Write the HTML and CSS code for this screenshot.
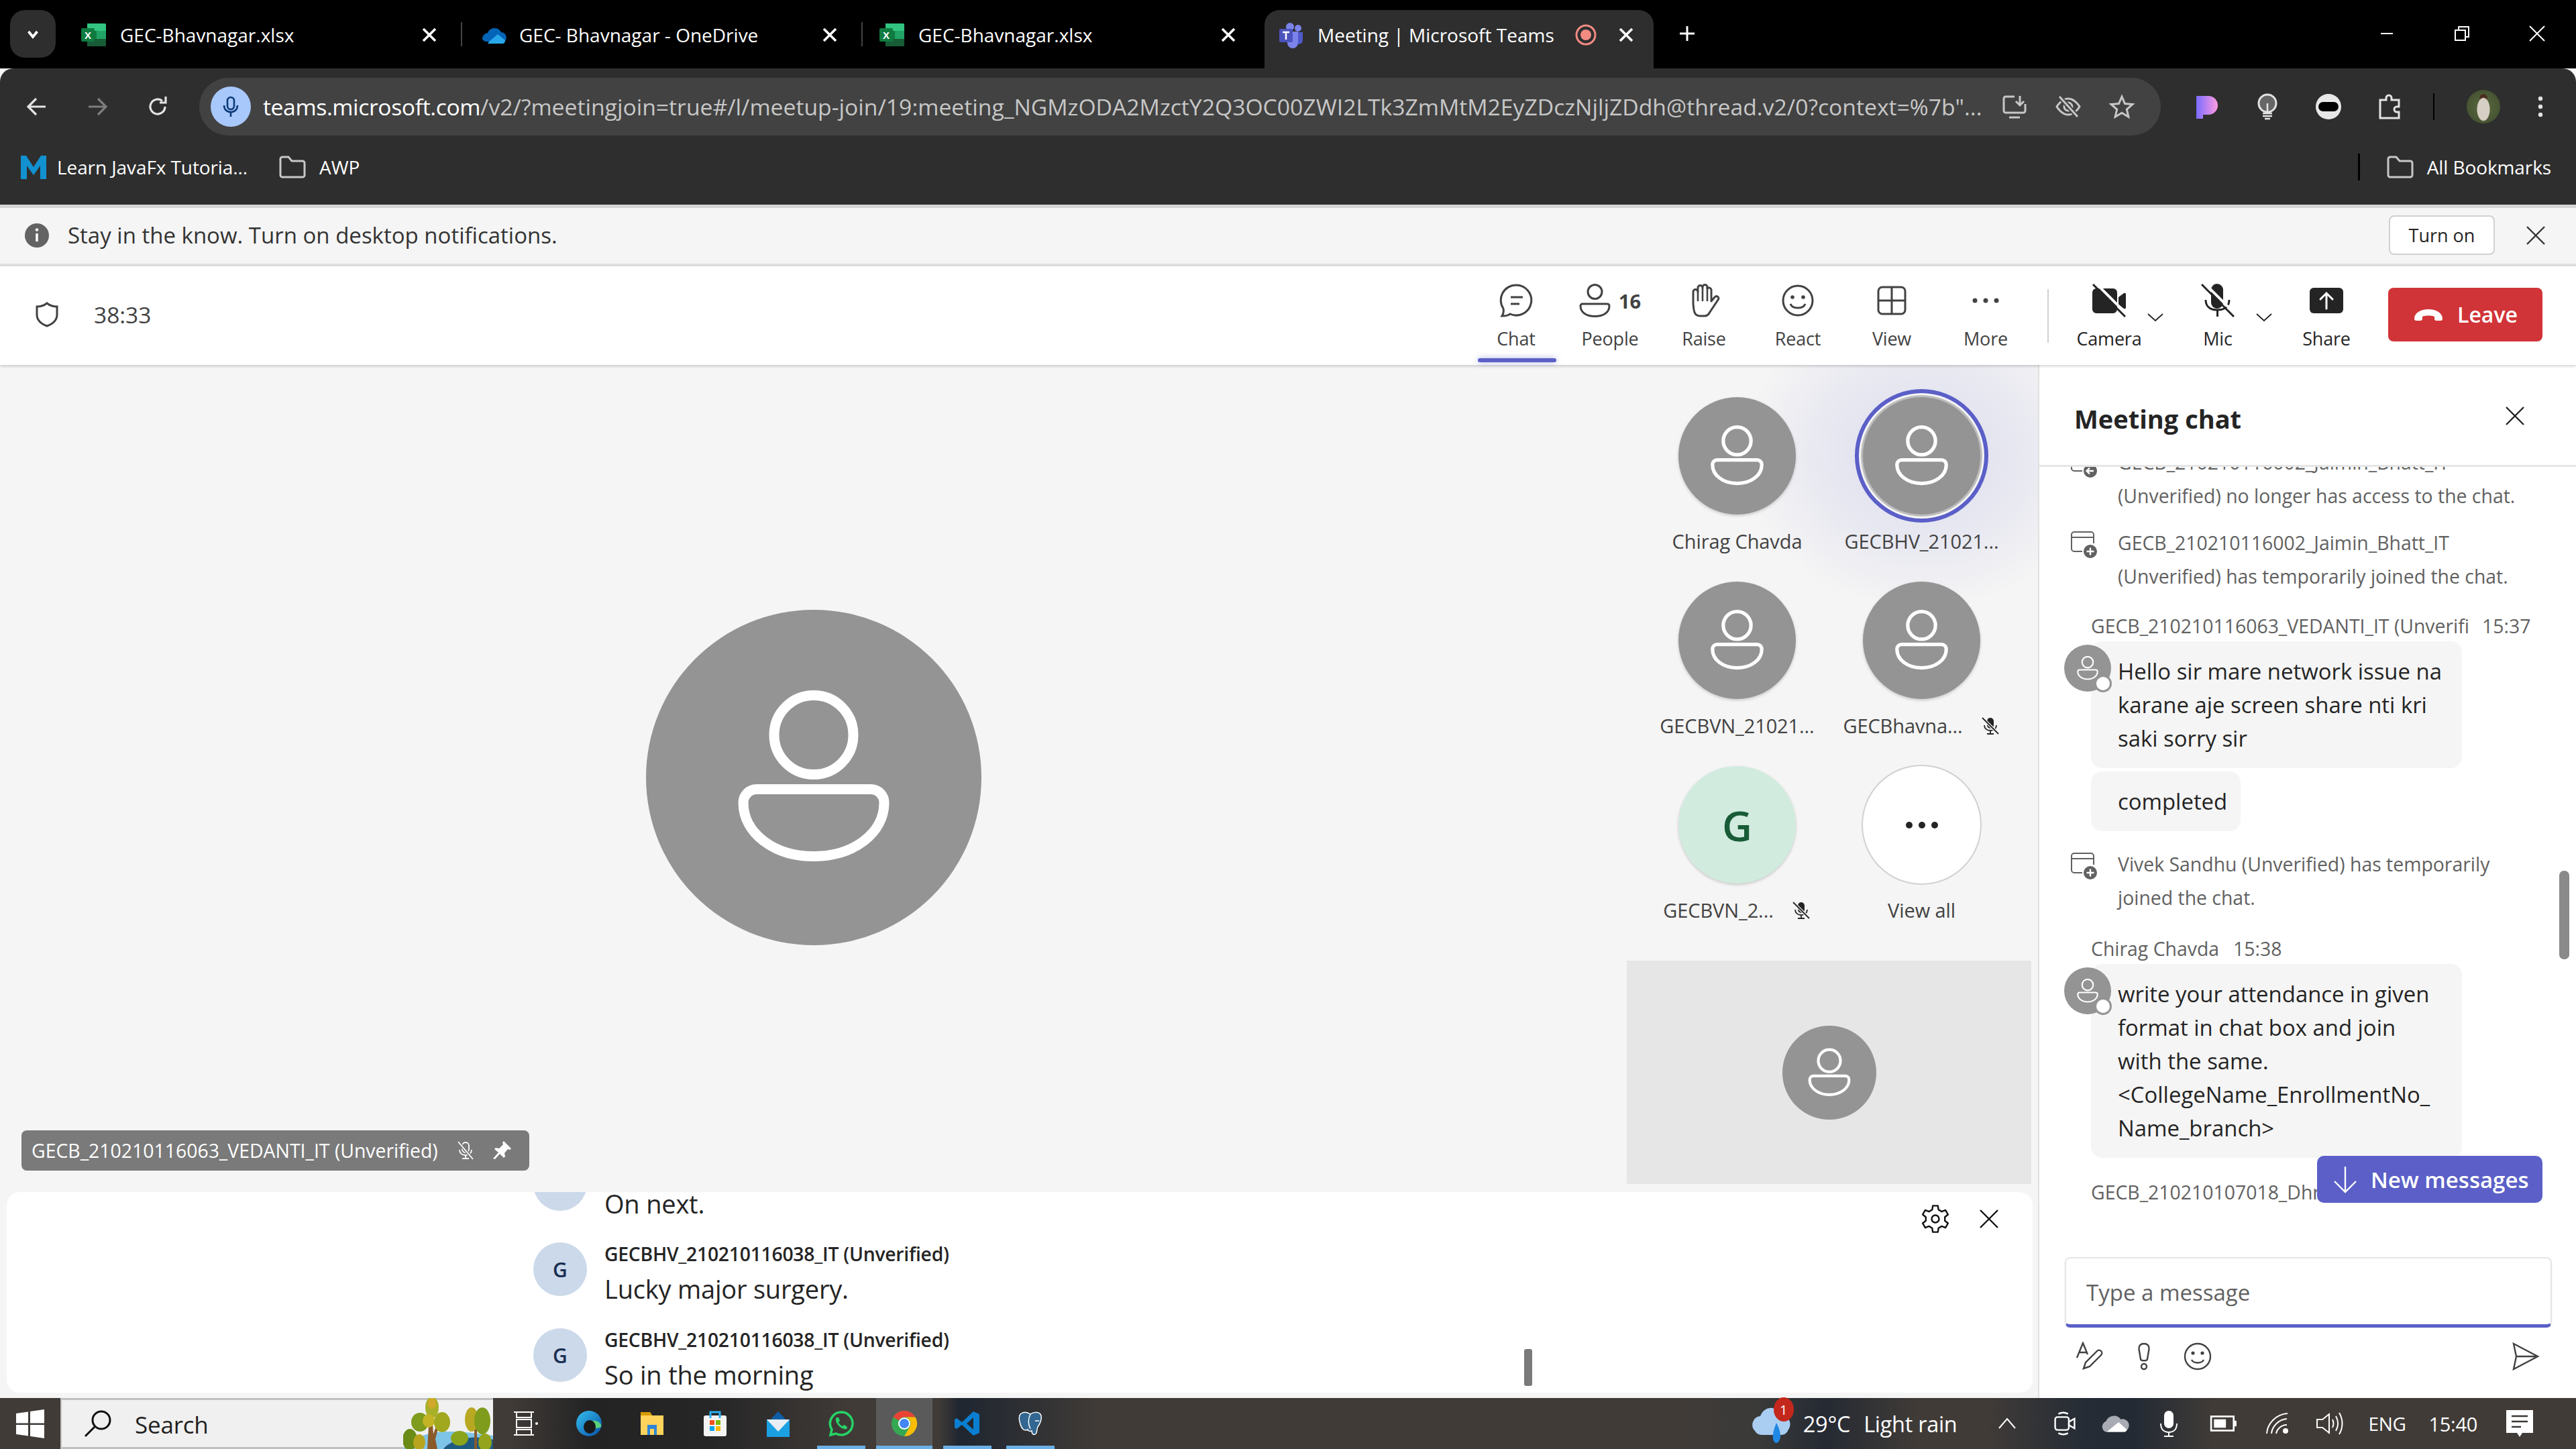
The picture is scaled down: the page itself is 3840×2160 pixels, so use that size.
FILE: index.html
```html
<!DOCTYPE html>
<html lang="en">
<head>
<meta charset="utf-8">
<title>Meeting | Microsoft Teams</title>
<link rel="stylesheet" href="styles.css">
</head>
<body>
<svg class="sprite" xmlns="http://www.w3.org/2000/svg">
  <symbol id="person" viewBox="0 0 100 100"><circle cx="50" cy="37.3" r="11.8" fill="none" stroke="#fff" stroke-width="3"/><path d="M33 53.5h34a4 4 0 0 1 4 4c0 9-9 16-21 16s-21-7-21-16a4 4 0 0 1 4-4z" fill="none" stroke="#fff" stroke-width="3"/></symbol>
  <symbol id="x" viewBox="0 0 30 30"><path d="M2 2l26 26M28 2L2 28" fill="none" stroke="currentColor" stroke-width="2.4"/></symbol>
  <symbol id="xbold" viewBox="0 0 30 30"><path d="M6 6l18 18M24 6L6 24" fill="none" stroke="currentColor" stroke-width="3.6"/></symbol>
  <symbol id="folder" viewBox="0 0 40 34"><path d="M2 5a3 3 0 0 1 3-3h9l5 6h16a3 3 0 0 1 3 3v18a3 3 0 0 1-3 3H5a3 3 0 0 1-3-3z" fill="none" stroke="currentColor" stroke-width="3"/></symbol>
  <symbol id="xls" viewBox="0 0 40 40"><path d="M10 3h26a2 2 0 0 1 2 2v30a2 2 0 0 1-2 2H10z" fill="#107c41"/><path d="M10 3h26a2 2 0 0 1 2 2v9H10z" fill="#33c481"/><path d="M24 14h14v12H24z" fill="#21a366"/><path d="M10 26h28v9a2 2 0 0 1-2 2H10z" fill="#185c37"/><rect x="1" y="10" width="20" height="20" rx="2" fill="#0f7b3f"/><text x="11" y="26" class="svgx">X</text></symbol>
  <symbol id="micoff" viewBox="0 0 30 30"><rect x="10" y="3" width="10" height="16" rx="5" fill="currentColor"/><path d="M6 14c0 5 4 8 9 8s9-3 9-8M15 22v5M10 27h10" fill="none" stroke="currentColor" stroke-width="1.8"/><path d="M3 3l24 24" stroke="#f5f5f5" stroke-width="4.5"/><path d="M3 3l24 24" stroke="currentColor" stroke-width="1.8"/></symbol>
  <symbol id="sysadd" viewBox="0 0 44 42"><path d="M7 30a4 4 0 0 1-4-4V5a4 4 0 0 1 4-4h25a4 4 0 0 1 4 4v13M3 9h33M7 30h13" fill="none" stroke="#616161" stroke-width="2"/><circle cx="31" cy="30" r="11" fill="#616161" stroke="#fff" stroke-width="2"/><path d="M31 24.500v11M25.500 30h11" stroke="#fff" stroke-width="2.400"/></symbol>
  <symbol id="sysleft" viewBox="0 0 44 42"><path d="M7 30a4 4 0 0 1-4-4V5a4 4 0 0 1 4-4h25a4 4 0 0 1 4 4v13M3 9h33M7 30h13" fill="none" stroke="#616161" stroke-width="2"/><circle cx="31" cy="30" r="11" fill="#616161" stroke="#fff" stroke-width="2"/><path d="M36 30H26M30 25.500L25.500 30l4.500 4.500" fill="none" stroke="#fff" stroke-width="2.400"/></symbol>
  <symbol id="chev" viewBox="0 0 24 14"><path d="M1 2l11 10L23 2" fill="none" stroke="currentColor" stroke-width="1.800"/></symbol>
</svg>

<header class="tabstrip">
  <button class="tablist"><svg class="i16" viewBox="0 0 20 20"><path d="M5 7l5 6 5-6" fill="none" stroke="#fff" stroke-width="3"/></svg></button>
  <div class="tab t1"><svg class="fav"><use href="#xls"/></svg><span class="tabtitle">GEC-Bhavnagar.xlsx</span><svg class="tabx"><use href="#xbold"/></svg></div>
  <div class="tab t2"><svg class="fav" viewBox="0 0 40 40"><path d="M4 26a9 9 0 0 1 8-9 11 11 0 0 1 20-1 8 8 0 0 1 5 14H10a7 7 0 0 1-6-4z" fill="#0364b8"/><path d="M14 30l13-11 11 9a5 5 0 0 1-3 5H12z" fill="#28a8ea"/></svg><span class="tabtitle">GEC- Bhavnagar - OneDrive</span><svg class="tabx"><use href="#xbold"/></svg></div>
  <div class="tab t3"><svg class="fav"><use href="#xls"/></svg><span class="tabtitle">GEC-Bhavnagar.xlsx</span><svg class="tabx"><use href="#xbold"/></svg></div>
  <div class="tab active">
    <svg class="fav" viewBox="0 0 40 40"><circle cx="30" cy="10" r="5" fill="#7b83eb"/><circle cx="18" cy="8" r="6" fill="#7b83eb"/><path d="M25 16h12v12a6 6 0 0 1-12 0z" fill="#5059c9"/><path d="M10 15h20v17a8 8 0 0 1-16 0z" fill="#7b83eb"/><rect x="2" y="11" width="20" height="20" rx="2" fill="#4b53bc"/><path d="M7 16h10M12 16v11" stroke="#fff" stroke-width="2.500"/></svg>
    <span class="tabtitle">Meeting | Microsoft Teams</span>
    <svg class="rec" viewBox="0 0 34 34"><circle cx="17" cy="17" r="14" fill="none" stroke="#f28b82" stroke-width="3"/><circle cx="17" cy="17" r="8" fill="#f28b82"/></svg>
    <svg class="tabx"><use href="#xbold"/></svg>
  </div>
  <svg class="plus" viewBox="0 0 30 30"><path d="M15 4v22M4 15h22" stroke="#fff" stroke-width="3"/></svg>
  <div class="winctl">
    <svg class="win" viewBox="0 0 30 30"><path d="M6 15h18" stroke="#fff" stroke-width="2"/></svg>
    <svg class="win" viewBox="0 0 30 30"><path d="M10 9V5h15v15h-4M5 10h15v15H5z" fill="none" stroke="#fff" stroke-width="2"/></svg>
    <svg class="win" viewBox="0 0 30 30"><path d="M4 4l22 22M26 4L4 26" stroke="#fff" stroke-width="2"/></svg>
  </div>
</header>

<div class="toolbar">
  <svg class="nav" viewBox="0 0 40 40"><path d="M33 20H8M19 8L7 20l12 12" fill="none" stroke="#e3e3e3" stroke-width="3.200"/></svg>
  <svg class="nav" viewBox="0 0 40 40"><path d="M7 20h25M21 8l12 12-12 12" fill="none" stroke="#7d7d7d" stroke-width="3.200"/></svg>
  <svg class="nav" viewBox="0 0 40 40"><path d="M31 20a11 11 0 1 1-4-8.500M32 5v9h-9" fill="none" stroke="#e3e3e3" stroke-width="3.200"/></svg>
  <div class="omnibox">
    <span class="micchip"><svg class="i36" viewBox="0 0 36 36"><rect x="13" y="4" width="10" height="18" rx="5" fill="none" stroke="#0b3a78" stroke-width="2.600"/><path d="M8 16c0 6 4 10 10 10s10-4 10-10M18 26v7" fill="none" stroke="#0b3a78" stroke-width="2.600"/></svg></span>
    <span class="url"><b class="host">teams.microsoft.com</b>/v2/?meetingjoin=true#/l/meetup-join/19:meeting_NGMzODA2MzctY2Q3OC00ZWI2LTk3ZmMtM2EyZDczNjljZDdh@thread.v2/0?context=%7b"...</span>
    <svg class="omni" viewBox="0 0 40 40"><path d="M20 5H7a3 3 0 0 0-3 3v18a3 3 0 0 0 3 3h26a3 3 0 0 0 3-3V16M12 36h16M28 4v14M22 12l6 6 6-6" fill="none" stroke="#c7c7c7" stroke-width="3"/></svg>
    <svg class="omni" viewBox="0 0 40 40"><path d="M3 20s7-12 17-12 17 12 17 12-7 12-17 12S3 20 3 20z" fill="none" stroke="#c7c7c7" stroke-width="3"/><circle cx="20" cy="20" r="6" fill="none" stroke="#c7c7c7" stroke-width="3"/><path d="M7 5l27 30" stroke="#424242" stroke-width="7"/><path d="M7 5l27 30" stroke="#c7c7c7" stroke-width="3"/></svg>
    <svg class="omni" viewBox="0 0 40 40"><path d="M20 5l4.500 10.500 11.500 1-8.700 7.500 2.600 11.200L20 29.300l-9.900 5.900 2.600-11.200L4 16.500l11.500-1z" fill="none" stroke="#c7c7c7" stroke-width="3"/></svg>
  </div>
  <div class="exts">
    <svg class="ext" viewBox="0 0 40 40"><defs><linearGradient id="pg" x1="0" x2="1"><stop offset="0" stop-color="#7a6cff"/><stop offset="1" stop-color="#ff9be0"/></linearGradient></defs><path d="M5 4h18a14 14 0 0 1 0 28h-8v6H5z" fill="url(#pg)"/></svg>
    <svg class="ext" viewBox="0 0 40 40"><circle cx="20" cy="15" r="13" fill="#666" stroke="#e3e3e3" stroke-width="3"/><path d="M13 30h14M13 34h14M16 38h8M20 15v15" stroke="#e3e3e3" stroke-width="2.600"/></svg>
    <svg class="ext" viewBox="0 0 40 40"><circle cx="20" cy="20" r="19" fill="#e8e8e8"/><rect x="5" y="13" width="30" height="14" rx="7" fill="#000"/></svg>
    <svg class="ext" viewBox="0 0 40 40"><path d="M6 10h9V7a4 4 0 0 1 8 0v3h11v10h-3a4 4 0 0 0 0 8h3v9H6z" fill="none" stroke="#e3e3e3" stroke-width="3"/></svg>
    <span class="vsep"></span>
    <span class="profile"></span>
    <svg class="ext" viewBox="0 0 40 40"><circle cx="20" cy="8" r="3.200" fill="#e3e3e3"/><circle cx="20" cy="20" r="3.200" fill="#e3e3e3"/><circle cx="20" cy="32" r="3.200" fill="#e3e3e3"/></svg>
  </div>
</div>

<nav class="bookmarks">
  <svg class="bmicon" viewBox="0 0 40 40"><path d="M1 38V3h8l11 17L31 3h8v35h-9V18l-10 14-10-14v20z" fill="#1291d0"/></svg>
  <span class="bmtext first">Learn JavaFx Tutoria...</span>
  <svg class="bmfolder"><use href="#folder"/></svg>
  <span class="bmtext">AWP</span>
  <span class="bmspace"></span>
  <span class="bmsep"></span>
  <svg class="bmfolder"><use href="#folder"/></svg>
  <span class="bmtext">All Bookmarks</span>
</nav>

<div class="notif">
  <svg class="info" viewBox="0 0 38 38"><circle cx="19" cy="19" r="18" fill="#636363"/><path d="M19 16v12" stroke="#fff" stroke-width="3.500"/><circle cx="19" cy="10.500" r="2.200" fill="#fff"/></svg>
  <span class="notiftext">Stay in the know. Turn on desktop notifications.</span>
  <span class="turnon">Turn on</span>
  <svg class="notifx"><use href="#x"/></svg>
</div>

<div class="meetbar">
  <svg class="shield" viewBox="0 0 40 40"><path d="M20 3c5 4 9 5 15 5v12c0 9-7 14-15 17C12 34 5 29 5 20V8c6 0 10-1 15-5z" fill="none" stroke="#424242" stroke-width="3"/></svg>
  <span class="timer">38:33</span>
  <span class="meetspace"></span>
  <div class="ctl sel">
    <svg class="ctlicon" viewBox="0 0 50 50"><path d="M25 2a22.500 22.500 0 1 1-9 43c-3 3-8 3-12 3 2-3 3-6 2-11A22.500 22.500 0 0 1 25 2z" fill="none" stroke="#424242" stroke-width="3"/><path d="M17 20h18M17 30h13" stroke="#424242" stroke-width="3"/></svg>
    <span>Chat</span>
  </div>
  <div class="ctl">
    <div class="peoplerow"><svg class="ctlicon pico" viewBox="0 0 47 50"><circle cx="23.500" cy="12" r="10.500" fill="none" stroke="#424242" stroke-width="3"/><path d="M5 30h37a3 3 0 0 1 3 3c0 10-9 15.500-21.500 15.500S2 43 2 33a3 3 0 0 1 3-3z" fill="none" stroke="#424242" stroke-width="3"/></svg><b class="count">16</b></div>
    <span>People</span>
  </div>
  <div class="ctl">
    <svg class="ctlicon" viewBox="0 0 50 50"><path d="M9 30V12a3.500 3.500 0 0 1 7 0V6a3.500 3.500 0 0 1 7 0V5a3.500 3.500 0 0 1 7 0v2a3.500 3.500 0 0 1 6 2v17l5-6c3-3 8 0 5 4L34 42c-2 4-4 6-8 6h-7c-5 0-8-3-9-9z" fill="none" stroke="#424242" stroke-width="3" stroke-linejoin="round"/><path d="M16 12v14M23 6v20M30 5v21" stroke="#424242" stroke-width="2.600"/></svg>
    <span>Raise</span>
  </div>
  <div class="ctl">
    <svg class="ctlicon" viewBox="0 0 50 50"><circle cx="25" cy="25" r="22" fill="none" stroke="#424242" stroke-width="3"/><circle cx="17" cy="20" r="2.800" fill="#424242"/><circle cx="33" cy="20" r="2.800" fill="#424242"/><path d="M14 30c3 8 19 8 22 0" fill="none" stroke="#424242" stroke-width="3"/></svg>
    <span>React</span>
  </div>
  <div class="ctl">
    <svg class="ctlicon" viewBox="0 0 50 50"><rect x="5" y="5" width="40" height="40" rx="6" fill="none" stroke="#424242" stroke-width="3"/><path d="M25 5v40M5 25h40" stroke="#424242" stroke-width="3"/></svg>
    <span>View</span>
  </div>
  <div class="ctl">
    <svg class="ctlicon" viewBox="0 0 50 50"><circle cx="9" cy="25" r="3.500" fill="#424242"/><circle cx="25" cy="25" r="3.500" fill="#424242"/><circle cx="41" cy="25" r="3.500" fill="#424242"/></svg>
    <span>More</span>
  </div>
  <span class="ctlsep"></span>
  <div class="ctl dev">
    <svg class="ctlicon" viewBox="0 0 50 50"><path d="M0 13a6 6 0 0 1 6-6h25a6 6 0 0 1 6 6v25a6 6 0 0 1-6 6H6a6 6 0 0 1-6-6zM39 20l8-6a2 2 0 0 1 3 2v19a2 2 0 0 1-3 2l-8-6z" fill="#242424"/><path d="M4 -2L52 46" stroke="#fff" stroke-width="4"/><path d="M1 1l48 48" stroke="#242424" stroke-width="3"/></svg>
    <span>Camera</span>
    <svg class="devchev"><use href="#chev"/></svg>
  </div>
  <div class="ctl dev">
    <svg class="ctlicon" viewBox="0 0 50 50"><rect x="15" y="0" width="18" height="37" rx="9" fill="#242424"/><path d="M7 24c0 10 7 15 17.500 15S42 34 42 24M24.500 39v10" fill="none" stroke="#242424" stroke-width="3"/><path d="M4 -2L52 46" stroke="#fff" stroke-width="4"/><path d="M1 1l48 48" stroke="#242424" stroke-width="3"/></svg>
    <span>Mic</span>
    <svg class="devchev"><use href="#chev"/></svg>
  </div>
  <div class="ctl dev">
    <svg class="ctlicon" viewBox="0 0 50 50"><rect x="0" y="6" width="50" height="38" rx="6" fill="#242424"/><path d="M25 37V15M16 23l9-9 9 9" fill="none" stroke="#fff" stroke-width="3" stroke-linecap="round"/></svg>
    <span>Share</span>
  </div>
  <button class="leave"><svg class="hangup" viewBox="0 0 46 24"><path d="M2 18c0-8 9-14 21-14s21 6 21 14c0 2-1 3-3 3h-6c-2 0-3-1-3-3v-3c-3-2-15-2-18 0v3c0 2-1 3-3 3H5c-2 0-3-1-3-3z" fill="#fff"/></svg>Leave</button>
</div>

<main class="content">
  <section class="stage">
    <div class="videos">
      <div class="mainvideo">
        <div class="avatar big"><svg class="person"><use href="#person"/></svg></div>
      </div>
      <div class="side">
        <div class="gallery">
          <div class="tile"><div class="avatar gal"><svg class="person"><use href="#person"/></svg></div><div class="tname">Chirag Chavda</div></div>
          <div class="tile"><div class="avatar gal speaking"><svg class="person"><use href="#person"/></svg></div><div class="tname">GECBHV_21021...</div></div>
          <div class="tile"><div class="avatar gal"><svg class="person"><use href="#person"/></svg></div><div class="tname">GECBVN_21021...</div></div>
          <div class="tile"><div class="avatar gal"><svg class="person"><use href="#person"/></svg></div><div class="tname">GECBhavna...<svg class="tmic"><use href="#micoff"/></svg></div></div>
          <div class="tile"><div class="avatar gal mint">G</div><div class="tname">GECBVN_2...<svg class="tmic"><use href="#micoff"/></svg></div></div>
          <div class="tile"><div class="avatar gal all"><svg class="alldots" viewBox="0 0 50 12"><circle cx="6" cy="6" r="5"/><circle cx="25" cy="6" r="5"/><circle cx="44" cy="6" r="5"/></svg></div><div class="tname">View all</div></div>
        </div>
        <div class="selfview"><div class="avatar self"><svg class="person"><use href="#person"/></svg></div></div>
      </div>
      <div class="nametag">GECB_210210116063_VEDANTI_IT (Unverified)
        <svg class="nt" viewBox="0 0 30 30"><rect x="10" y="3" width="10" height="15" rx="5" fill="none" stroke="#fff" stroke-width="1.800"/><path d="M6 14c0 5 4 8 9 8s9-3 9-8M15 22v5M10 27h10" fill="none" stroke="#fff" stroke-width="1.800"/><path d="M4 2l22 26" stroke="#7a7a7a" stroke-width="4.500"/><path d="M4 2l22 26" stroke="#fff" stroke-width="1.800"/></svg>
        <svg class="nt" viewBox="0 0 30 30"><path d="M18 1l11 11-2 2-3-1-5 6 1 5-2 2-6-6-7 8-3-1 8-9-6-5 2-2 5 1 6-6-1-3z" fill="#fff"/></svg>
      </div>
    </div>
    <div class="captions">
      <div class="caplist">
        <div class="cap clipped"><div class="capav">G</div><div class="capbody"><div class="captext">On next.</div></div></div>
        <div class="cap"><div class="capav">G</div><div class="capbody"><div class="capname">GECBHV_210210116038_IT (Unverified)</div><div class="captext">Lucky major surgery.</div></div></div>
        <div class="cap"><div class="capav">G</div><div class="capbody"><div class="capname">GECBHV_210210116038_IT (Unverified)</div><div class="captext">So in the morning</div></div></div>
      </div>
      <span class="capthumb"></span>
      <div class="captools">
        <svg class="captool" viewBox="0 0 44 44"><path d="M17.300 8.300L18.200 2.400H25.800L26.700 8.300 31.500 11.100 37.100 8.900 40.900 15.500 36.200 19.200V24.800L40.900 28.500 37.100 35.100 31.500 32.900 26.700 35.700 25.800 41.600H18.200L17.300 35.700 12.500 32.900 6.900 35.100 3.100 28.500 7.800 24.800V19.200L3.100 15.500 6.900 8.900 12.500 11.100z" fill="none" stroke="#111" stroke-width="2.400" stroke-linejoin="round"/><circle cx="22" cy="22" r="5.500" fill="none" stroke="#111" stroke-width="2.400"/></svg>
        <svg class="capx"><use href="#x"/></svg>
      </div>
    </div>
  </section>

  <aside class="chat">
    <div class="chathead"><h2>Meeting chat</h2><svg class="chatx"><use href="#x"/></svg></div>
    <div class="msgs">
      <div class="sys first"><svg class="sysicon"><use href="#sysleft"/></svg><p>GECB_210210116002_Jaimin_Bhatt_IT<br>(Unverified) no longer has access to the chat.</p></div>
      <div class="sys"><svg class="sysicon"><use href="#sysadd"/></svg><p>GECB_210210116002_Jaimin_Bhatt_IT<br>(Unverified) has temporarily joined the chat.</p></div>
      <div class="msg">
        <div class="meta"><span class="who clip">GECB_210210116063_VEDANTI_IT (Unverified)</span><span>15:37</span></div>
        <div class="chatav"><svg class="person"><use href="#person"/></svg><span class="status"></span></div>
        <div class="bubble wide">Hello sir mare network issue na<br>karane aje screen share nti kri<br>saki sorry sir</div>
        <div class="bubble">completed</div>
      </div>
      <div class="sys after"><svg class="sysicon"><use href="#sysadd"/></svg><p>Vivek Sandhu (Unverified) has temporarily<br>joined the chat.</p></div>
      <div class="msg second">
        <div class="meta"><span class="who">Chirag Chavda</span><span>15:38</span></div>
        <div class="chatav"><svg class="person"><use href="#person"/></svg><span class="status"></span></div>
        <div class="bubble wide">write your attendance in given<br>format in chat box and join<br>with the same.<br>&lt;CollegeName_EnrollmentNo_<br>Name_branch&gt;</div>
      </div>
      <div class="msg third"><div class="meta"><span class="who">GECB_210210107018_Dhruv_Patel_IT</span></div></div>
      <span class="thumb"></span>
    </div>
    <button class="newmsg"><svg class="newarrow" viewBox="0 0 36 42"><path d="M18 2v38M2 24l16 16 16-16" fill="none" stroke="#fff" stroke-width="2.400"/></svg>New messages</button>
    <div class="composer">
      <div class="inputbox">Type a message</div>
      <div class="tools">
        <svg class="tool" viewBox="0 0 44 44"><path d="M2 24L11 2l7 17M5 16h11" fill="none" stroke="#424242" stroke-width="2.400"/><path d="M12 40l3-9 17-17a4 4 0 0 1 6 6L21 37z" fill="none" stroke="#424242" stroke-width="2.400"/></svg>
        <svg class="tool" viewBox="0 0 44 44"><path d="M22 3c5 0 8 3 7.500 8L27 26c-.5 3-9.500 3-10 0l-2.500-15C14 6 17 3 22 3z" fill="none" stroke="#424242" stroke-width="2.400"/><circle cx="22" cy="37" r="4" fill="none" stroke="#424242" stroke-width="2.400"/></svg>
        <svg class="tool" viewBox="0 0 44 44"><circle cx="22" cy="22" r="19" fill="none" stroke="#424242" stroke-width="2.400"/><circle cx="15" cy="17" r="2.600" fill="#424242"/><circle cx="29" cy="17" r="2.600" fill="#424242"/><path d="M13 27c3 6 15 6 18 0" fill="none" stroke="#424242" stroke-width="2.400"/></svg>
        <span class="toolspace"></span>
        <svg class="tool" viewBox="0 0 44 44"><path d="M5 3l36 19L5 41l4-19zM9 22h32" fill="none" stroke="#424242" stroke-width="2.400"/></svg>
      </div>
    </div>
  </aside>
</main>

<footer class="taskbar">
  <div class="start"><svg class="winlogo" viewBox="0 0 44 44"><path d="M1 7l18-2.500v17H1zM22 4l21-3v20.500H22zM1 24h18v16.500L1 38zM22 24h21v20l-21-3z" fill="#fff"/></svg></div>
  <div class="search">
    <svg class="mag" viewBox="0 0 44 44"><circle cx="27" cy="17" r="13" fill="none" stroke="#111" stroke-width="3"/><path d="M17 27L3 41" stroke="#111" stroke-width="3"/></svg>
    <span class="searchtext">Search</span>
    <svg class="tree" viewBox="0 0 134 76"><path d="M0 76c30-30 60-30 134-20v20z" fill="#7ec4e8"/><path d="M60 76c10-14 44-22 74-14v14z" fill="#1f5a80"/><path d="M36 76l3-52h4l2 30 8-24 3 1-8 30 3 15z" fill="#8a5a2b"/><rect x="106" y="30" width="4" height="46" fill="#8a5a2b"/><ellipse cx="43" cy="14" rx="10" ry="16" fill="#a8b02a"/><ellipse cx="43" cy="8" rx="6" ry="8" fill="#d0a82a"/><ellipse cx="25" cy="36" rx="13" ry="14" fill="#7f9c1c"/><ellipse cx="38" cy="34" rx="9" ry="10" fill="#c2b424"/><ellipse cx="58" cy="36" rx="12" ry="15" fill="#a2a81e"/><ellipse cx="10" cy="62" rx="11" ry="16" fill="#6a8c16"/><ellipse cx="24" cy="66" rx="9" ry="12" fill="#b8a41e"/><ellipse cx="84" cy="60" rx="13" ry="11" fill="#8aa41c"/><ellipse cx="102" cy="32" rx="10" ry="18" fill="#b8a822"/><ellipse cx="118" cy="34" rx="12" ry="20" fill="#7f9c1c"/><ellipse cx="122" cy="66" rx="10" ry="13" fill="#94a41c"/></svg>
  </div>
  <div class="apps">
    <div class="app"><svg class="appi" viewBox="0 0 40 40"><path d="M2 3h30M2 37h30M6 3v8h22V3M6 37v-8h22v8M6 14h22v12H6z" fill="none" stroke="#fff" stroke-width="2"/><circle cx="36" cy="20" r="2" fill="#fff"/></svg></div>
    <div class="app"><svg class="appi" viewBox="0 0 40 40"><defs><linearGradient id="edge" x1="0" y1="0" x2="1" y2="1"><stop offset="0" stop-color="#35c1f1"/><stop offset="1" stop-color="#094ea5"/></linearGradient></defs><circle cx="20" cy="20" r="19" fill="url(#edge)"/><path d="M38 25c-4 3-14 3-16-3-1-4 3-7 8-6 5 1 9 5 8 9z" fill="#5ad07a"/><ellipse cx="21" cy="25" rx="9" ry="10" fill="#1a1a1a"/></svg></div>
    <div class="app"><svg class="appi" viewBox="0 0 40 40"><path d="M3 3h14l3 5h17v29H3z" fill="#ffd35c"/><path d="M3 3h14l3 5H3z" fill="#d89a00"/><path d="M13 22h14v15h-4v-9h-6v9h-4z" fill="#2f86d8"/></svg></div>
    <div class="app"><svg class="appi" viewBox="0 0 40 40"><rect x="3" y="8" width="34" height="31" rx="3" fill="#f4f4f4"/><path d="M13 12V3h14v9" fill="none" stroke="#2ab0f0" stroke-width="3"/><rect x="12" y="15" width="7" height="7" fill="#f25022"/><rect x="21" y="15" width="7" height="7" fill="#7fba00"/><rect x="12" y="24" width="7" height="7" fill="#00a4ef"/><rect x="21" y="24" width="7" height="7" fill="#ffb900"/></svg></div>
    <div class="app"><svg class="appi" viewBox="0 0 40 40"><path d="M20 2l17 18H3z" fill="#0f5ea8"/><path d="M3 14h34v26H3z" fill="#1ba1e2"/><path d="M3 14h34L20 32z" fill="#e8eef3"/></svg></div>
    <div class="app on"><svg class="appi" viewBox="0 0 40 40"><path d="M20 3a17 17 0 0 1 0 34c-3 0-6-1-8-2l-8 2 2-8A17 17 0 0 1 20 3z" fill="none" stroke="#25d366" stroke-width="3.500"/><path d="M13 11c-3 3 0 9 4 13s10 6 12 3l-1-3-4-2-2 2c-3-1-5-4-6-6l2-2-2-5z" fill="#25d366"/></svg></div>
    <div class="app on hot"><svg class="appi" viewBox="0 0 40 40"><circle cx="20" cy="20" r="19" fill="#34a853"/><path d="M20 1a19 19 0 0 1 16.500 9.500H20a9.500 9.500 0 0 0-8.200 4.800L3.500 10.500A19 19 0 0 1 20 1z" fill="#ea4335"/><path d="M36.500 10.500A19 19 0 0 1 20 39l8.200-14.200A9.500 9.500 0 0 0 20 10.500z" fill="#fbbc04"/><circle cx="20" cy="20" r="9" fill="#fff"/><circle cx="20" cy="20" r="7" fill="#4285f4"/></svg></div>
    <div class="app on"><svg class="appi" viewBox="0 0 40 40"><path d="M29 2l9 4v28l-9 4L12 22l-8 6-3-2v-12l3-2 8 6zM29 11l-10 9 10 9z" fill="#0a7fd1"/></svg></div>
    <div class="app on"><svg class="appi" viewBox="0 0 40 40"><path d="M5 6c6-5 12-2 15 0 4-3 11-4 15 0 3 5 0 14-4 19-1 2-1 5-2 9-2 4-7 3-7-3-3 1-6 0-6-2-5 3-9-1-11-8C3 15 2 10 5 6z" fill="#336791" stroke="#fff" stroke-width="1.500"/><path d="M20 6c-4 8-3 16 0 22M27 16h6" fill="none" stroke="#fff" stroke-width="1.500"/></svg></div>
  </div>
  <span class="tbspace"></span>
  <div class="tray">
    <div class="weather"><svg class="wicon" viewBox="0 0 62 62"><path d="M4 42a13 13 0 0 1 8-22 17 17 0 0 1 32-2 14 14 0 0 1 10 22 12 12 0 0 1-10 8H14a12 12 0 0 1-10-6z" fill="#aacdf2"/><path d="M36 30c3 6 6 12 6 20 0 5-3 10-6 10s-6-5-5-10c0-8 3-14 5-20z" fill="#1e88e5"/></svg><span class="badge">1</span></div>
    <span class="temp">29°C</span><span class="sky">Light rain</span>
    <svg class="trayi chevup" viewBox="0 0 30 30"><path d="M3 22L15 8l12 14" fill="none" stroke="#fff" stroke-width="2"/></svg>
    <svg class="trayi trcam" viewBox="0 0 30 30"><rect x="3" y="7" width="17" height="16" rx="3" fill="none" stroke="#fff" stroke-width="2"/><path d="M20 13l7-4v12l-7-4zM7 3c4-2 8-2 12 0M7 27c4 2 8 2 12 0" fill="none" stroke="#fff" stroke-width="2"/></svg>
    <svg class="trayi od" viewBox="0 0 40 26"><path d="M3 22a8 8 0 0 1 4-12 12 12 0 0 1 21-3 9 9 0 0 1 9 15 6 6 0 0 1-4 3H8a6 6 0 0 1-5-3z" fill="#a8abb3"/><path d="M8 25L25 11l12 11a6 6 0 0 1-4 3z" fill="#fff"/></svg>
    <svg class="trayi micw" viewBox="0 0 30 40"><rect x="8" y="1" width="14" height="26" rx="7" fill="#fff"/><path d="M3 20c0 9 5 13 12 13s12-4 12-13M15 33v6M8 39h14" fill="none" stroke="#fff" stroke-width="2"/></svg>
    <svg class="trayi batt" viewBox="0 0 40 26"><rect x="2" y="3" width="32" height="20" fill="none" stroke="#fff" stroke-width="2.500"/><rect x="6" y="7" width="17" height="12" fill="#fff"/><rect x="35" y="9" width="3" height="8" fill="#fff"/></svg>
    <svg class="trayi wifi" viewBox="0 0 40 34"><path d="M2 32C3 17 16 3 33 2M9 32C10 21 20 11 32 10M16 32c1-6 7-13 16-13" fill="none" stroke="#fff" stroke-width="2"/><circle cx="30" cy="28" r="4" fill="#fff"/></svg>
    <svg class="trayi vol" viewBox="0 0 42 36"><path d="M2 12h8l10-8v28l-10-8H2z" fill="none" stroke="#fff" stroke-width="2"/><path d="M25 12c2 4 2 8 0 12M30 7c4 7 4 15 0 22M35 2c6 10 6 22 0 32" fill="none" stroke="#fff" stroke-width="2"/></svg>
    <span class="eng">ENG</span>
    <span class="clock">15:40</span>
    <svg class="trayi notifi" viewBox="0 0 40 40"><path d="M0 0h40v34H24l-4 6-4-6H0z" fill="#fff"/><path d="M8 9h24M8 17h24M8 25h14" stroke="#3b3835" stroke-width="2.500"/></svg>
  </div>
</footer>
</body>
</html>
```

FILE: styles.css
```css
* { box-sizing: border-box; }
html, body { margin: 0; padding: 0; }
body {
  width: 3840px; height: 2160px; overflow: hidden;
  display: flex; flex-direction: column;
  font-family: "Open Sans", "Noto Sans", sans-serif;
  background: #f5f5f5; color: #242424;
}
.sprite { display: none; }
.svgx { font: 700 15px "Liberation Sans", sans-serif; fill: #fff; text-anchor: middle; }
button { border: 0; font: inherit; }
p, h2 { margin: 0; }

/* Browser chrome */
.tabstrip { height: 102px; background: #000; display: flex; align-items: flex-start; flex: none; color: #fff; }
.tablist { width: 68px; height: 71px; margin: 15px 0 0 15px; background: #2e2e2e; border-radius: 22px; display: flex; align-items: center; justify-content: center; padding: 0; }
.i16 { width: 26px; height: 26px; }
.tab { height: 87px; margin-top: 15px; display: flex; align-items: center; font-size: 28px; color: #fff; padding-bottom: 14px; position: relative; }
.t1 { width: 604px; padding-left: 37px; }
.t2 { width: 597px; padding-left: 28px; }
.t3 { width: 601px; padding-left: 26px; }
.tab.active { width: 580px; padding-left: 20px; background: #2e2e2e; border-radius: 22px 22px 0 0; }
.t1::after, .t2::after { content: ""; position: absolute; right: -2px; top: 18px; height: 36px; width: 2px; background: #444; }
.fav { width: 40px; height: 40px; flex: none; }
.tabtitle { margin-left: 19px; white-space: nowrap; flex: 1; }
.tabx { width: 30px; height: 30px; flex: none; margin-right: 32px; color: #fff; }
.t3 .tabx { margin-right: 39px; }
.rec { width: 34px; height: 34px; margin-right: 28px; flex: none; }
.tab.active .tabx { margin-right: 26px; }
.plus { width: 30px; height: 30px; margin: 35px 0 0 35px; }
.winctl { margin-left: auto; display: flex; gap: 82px; padding: 35px 43px 0 0; }
.win { width: 30px; height: 30px; }

.toolbar { height: 101px; background: #2e2e2e; display: flex; align-items: center; padding: 12px 0 0 35px; flex: none; border-radius: 20px 20px 0 0; }
.nav { width: 40px; height: 40px; margin-right: 50px; flex: none; }
.omnibox { margin-left: -8px; width: 2924px; height: 86px; background: #424242; border-radius: 43px; display: flex; align-items: center; padding-left: 17px; flex: none; }
.micchip { width: 60px; height: 60px; border-radius: 50%; background: #a8c7fa; display: flex; align-items: center; justify-content: center; flex: none; }
.i36 { width: 36px; height: 36px; }
.url { margin-left: 18px; width: 2591px; white-space: nowrap; overflow: hidden; font-size: 33.7px; color: #c7c7c7; flex: none; }
.host { color: #fff; font-weight: 400; letter-spacing: -.4px; }
.omni { width: 40px; height: 40px; flex: none; margin-right: 40px; }
.exts { display: flex; align-items: center; margin-left: 48px; }
.ext { width: 40px; height: 40px; margin-right: 51px; flex: none; }
.vsep { width: 2px; height: 40px; background: #000; margin: 0 48px 0 -6px; }
.profile { width: 50px; height: 50px; border-radius: 50%; margin-right: 40px; background: radial-gradient(ellipse 10px 18px at 50% 58%, #d8cfc4 0 90%, transparent 100%), radial-gradient(circle 6px at 50% 24%, #4a2c20 0 90%, transparent 100%), radial-gradient(circle at 50% 50%, #596b3e, #3f4a2e); flex: none; }

.bookmarks { height: 102px; background: #2e2e2e; display: flex; align-items: center; padding: 0 37px 10px 30px; font-size: 28px; color: #fff; flex: none; }
.bmicon { width: 40px; height: 40px; flex: none; }
.bmtext { white-space: nowrap; margin-left: 20px; letter-spacing: -.1px; }
.bmtext.first { margin-left: 15px; margin-right: 47px; }
.bmfolder { width: 40px; height: 34px; color: #c7c7c7; flex: none; }
.bmspace { flex: 1; }
.bmsep { width: 3px; height: 40px; background: #000; margin-right: 40px; }

.notif { height: 92px; background: #f5f5f5; display: flex; align-items: center; padding: 0 45px 2px 36px; border-top: 5px solid #d4d4d4; border-bottom: 4px solid #e0e0e0; flex: none; }
.info { width: 38px; height: 38px; flex: none; }
.notiftext { font-size: 33px; margin-left: 27px; color: #333; }
.turnon { margin-left: auto; width: 158px; height: 59px; background: #fff; border: 2px solid #d1d1d1; border-radius: 8px; font-size: 27px; display: flex; align-items: center; justify-content: center; color: #242424; }
.notifx { width: 30px; height: 30px; margin-left: 46px; color: #333; }

/* Meeting bar */
.meetbar { height: 147px; background: #fff; display: flex; align-items: center; padding: 0 50px; flex: none; box-shadow: 0 2px 4px rgba(0,0,0,.18); position: relative; z-index: 2; }
.shield { width: 40px; height: 40px; flex: none; margin-bottom: 4px; }
.timer { margin-left: 50px; font-size: 33.5px; color: #424242; margin-bottom: 4px; }
.meetspace { flex: 1; }
.ctl { width: 140px; height: 147px; display: flex; flex-direction: column; align-items: center; padding-top: 26px; font-size: 27px; color: #424242; position: relative; flex: none; }
.ctlicon { width: 50px; height: 50px; flex: none; }
.ctl > span { margin-top: 12px; line-height: 40px; letter-spacing: -.2px; }
.ctl.sel::after { content: ""; position: absolute; left: 13px; width: 117px; bottom: 4px; height: 6px; border-radius: 3px; background: #5b5fc7; box-shadow: 0 0 8px rgba(91,95,199,.5); }
.peoplerow { display: flex; align-items: center; gap: 12px; height: 50px; }
.pico { width: 47px; }
.count { font-size: 29px; font-weight: 700; }
.ctlsep { width: 2px; height: 80px; background: #d1d1d1; margin: 0 9px 0 22px; flex: none; }
.dev { width: 162px; }
.dev > span { color: #242424; }
.devchev { position: absolute; right: 0; top: 69px; width: 24px; height: 14px; color: #242424; }
.leave { width: 230px; height: 80px; background: #d13438; color: #fff; border-radius: 8px; display: flex; align-items: center; justify-content: center; gap: 20px; font-size: 32px; font-weight: 600; margin: 0 0 4px 11px; padding: 0; flex: none; }
.hangup { width: 46px; height: 24px; }

/* Stage */
.content { flex: 1; display: flex; min-height: 0; }
.stage { width: 3040px; flex: none; display: flex; flex-direction: column; padding-bottom: 8px; border-right: 2px solid #e0e0e0; background: #f5f5f5; }
.videos { height: 1233px; display: flex; flex: none; position: relative; }
.mainvideo { width: 2425px; display: flex; align-items: center; justify-content: center; flex: none; }
.side { flex: 1; display: flex; flex-direction: column; background: radial-gradient(ellipse 270px 230px at 439px 135px, rgba(91,95,199,.16), rgba(91,95,199,.08) 60%, transparent); }
.gallery { display: grid; grid-template-columns: 275px 275px; justify-content: start; margin-left: 27px; padding-top: 48px; height: 888px; align-content: start; }
.tile { height: 275px; display: flex; flex-direction: column; align-items: center; }
.avatar { border-radius: 50%; background: #949494; display: flex; align-items: center; justify-content: center; flex: none; position: relative; }
.avatar.big { width: 500px; height: 500px; margin-top: -4px; }
.avatar.gal { width: 175px; height: 175px; box-shadow: 0 2px 4px rgba(0,0,0,.18); }
.avatar.self { width: 140px; height: 140px; }
.person { width: 100%; height: 100%; display: block; }
.avatar.speaking { box-shadow: 0 0 0 3px #bdbdbd, 0 0 0 6px #f5f5f5; outline: 6px solid #5b5fc7; outline-offset: 6px; }
.mint { background: #d2ebdf; color: #185c37; font-size: 62px; font-weight: 600; }
.avatar.all { background: #fff; box-shadow: 0 0 0 2px #d1d1d1; }
.alldots { width: 50px; height: 12px; fill: #242424; }
.tname { margin-top: 22px; font-size: 29px; line-height: 36px; color: #424242; white-space: nowrap; display: flex; align-items: center; justify-content: center; letter-spacing: -.1px; }
.tmic { width: 30px; height: 30px; margin-left: 26px; color: #242424; flex: none; }
.selfview { width: 603px; height: 333px; background: #e6e6e6; display: flex; align-items: center; justify-content: center; }
.nametag { position: absolute; left: 32px; top: 1141px; width: 757px; height: 60px; background: #7a7a7a; border-radius: 8px; color: #fff; font-size: 28.4px; display: flex; align-items: center; padding-left: 15px; white-space: nowrap; }
.nt { width: 30px; height: 30px; margin-left: 26px; flex: none; }
.nt + .nt { margin-left: 24px; }
.captions { flex: 1; margin: 0 8px 0 10px; background: #fff; border-radius: 20px; position: relative; overflow: hidden; padding-left: 785px; }
.caplist { display: flex; flex-direction: column; }
.cap { display: flex; height: 128px; gap: 26px; flex: none; }
.cap.clipped { margin-top: -52px; height: 127px; }
.clipped .captext { margin-top: 43px; }
.capav { width: 80px; height: 80px; border-radius: 50%; background: #cbd9ea; color: #1b2f52; display: flex; align-items: center; justify-content: center; font-size: 30px; font-weight: 600; flex: none; }
.capname { font-size: 28.3px; font-weight: 600; line-height: 38px; margin-top: -2px; white-space: nowrap; letter-spacing: -.25px; }
.captext { font-size: 38px; line-height: 52px; margin-top: 7px; white-space: nowrap; letter-spacing: -.2px; }
.capthumb { position: absolute; left: 2262px; top: 234px; width: 12px; height: 55px; background: #7a7a7a; border-radius: 3px; }
.captools { position: absolute; right: 50px; top: 18px; display: flex; gap: 43px; align-items: center; }
.captool { width: 44px; height: 44px; }
.capx { width: 30px; height: 30px; color: #111; }

/* Chat */
.chat { flex: 1; min-width: 0; background: #fff; display: flex; flex-direction: column; position: relative; }
.chathead { height: 152px; flex: none; border-bottom: 3px solid #e6e6e6; display: flex; align-items: center; justify-content: space-between; padding: 10px 76px 0 52px; }
h2 { font-size: 38px; font-weight: 700; color: #242424; }
.chatx { width: 30px; height: 30px; margin-top: -8px; color: #242424; }
.msgs { height: 1178px; flex: none; overflow: hidden; padding: 0 0 0 37px; position: relative; font-size: 29px; }
.sys { display: flex; color: #616161; line-height: 50px; }
.sys.first { margin-top: -32px; }
.sys + .sys { margin-top: 20px; }
.sys.after { margin-top: 24px; }
.sysicon { width: 44px; height: 42px; margin: 8px 0 0 8px; flex: none; }
.sys p { margin-left: 28px; font-size: 28.4px; white-space: nowrap; }
.msg { position: relative; padding-left: 40px; margin-top: 29px; }
.meta { display: flex; gap: 21px; color: #616161; font-size: 28.4px; line-height: 40px; margin-bottom: 3px; }
.who { white-space: nowrap; }
.clip { width: 562px; overflow: hidden; }
.chatav { position: absolute; left: 0; top: 48px; width: 70px; height: 70px; border-radius: 50%; background: #949494; z-index: 1; }
.status { position: absolute; right: -1px; bottom: -1px; width: 26px; height: 26px; border-radius: 50%; background: #fff; border: 3px solid #949494; box-shadow: inset 0 0 0 1px #fff; }
.bubble { background: #f5f5f5; border-radius: 16px; padding: 20px 20px 19px 40px; font-size: 32.9px; line-height: 50px; width: fit-content; white-space: nowrap; color: #242424; margin-bottom: 5px; }
.bubble.wide { width: 553px; }
.msg.second { margin-top: 31px; }
.msg.third { margin-top: 31px; }
.thumb { position: absolute; left: 775px; top: 602px; width: 15px; height: 132px; border-radius: 7px; background: #8a8a8a; }
.newmsg { position: absolute; left: 414px; top: 1179px; width: 336px; height: 70px; background: #5b5fc7; color: #fff; border-radius: 10px; display: flex; align-items: center; font-size: 33px; font-weight: 600; padding-left: 24px; gap: 20px; }
.newarrow { width: 36px; height: 42px; }
.composer { flex: 1; padding: 0 36px 0 38px; }
.inputbox { height: 105px; border: 2px solid #e6e6e6; border-bottom: 5px solid #5b5fc7; border-radius: 8px; display: flex; align-items: center; padding: 2px 0 0 30px; font-size: 33px; color: #616161; box-shadow: 0 1px 3px rgba(0,0,0,.08); }
.tools { display: flex; align-items: center; gap: 36px; padding: 21px 18px 0 16px; }
.tool { width: 44px; height: 44px; flex: none; }
.toolspace { flex: 1; }

/* Taskbar */
.taskbar { height: 76px; flex: none; display: flex; align-items: stretch; color: #fff; background: linear-gradient(90deg, #403b37 0, #403b37 760px, #232324 880px, #262627 1060px, #403b37 1270px, #403b37 1400px, #1f2630 1430px, #403b37 1640px, #403b37 2500px, #3a3a39 2620px, #252a33 2720px, #403b37 2860px, #403b37 2960px, #252c36 3110px, #232a34 3180px, #403b37 3300px); }
.start { width: 90px; display: flex; align-items: center; justify-content: center; flex: none; }
.winlogo { width: 44px; height: 44px; }
.search { width: 645px; flex: none; background: #f0f0f0; border-top: 3px solid #c0c0c0; border-bottom: 3px solid #c0c0c0; border-left: 2px solid #c0c0c0; display: flex; align-items: center; padding-left: 32px; color: #1f1f1f; position: relative; }
.mag { width: 44px; height: 44px; flex: none; }
.searchtext { font-size: 35px; margin-left: 33px; letter-spacing: -.2px; padding-top: 2px; }
.tree { position: absolute; right: 0; top: -3px; width: 134px; height: 76px; }
.apps { display: flex; margin-left: 2px; }
.app { width: 94px; display: flex; align-items: center; justify-content: center; position: relative; flex: none; }
.appi { width: 40px; height: 40px; }
.app.on::after { content: ""; position: absolute; left: 11px; right: 11px; bottom: 0; height: 5px; background: #6cb0e6; }
.app.hot { background: #5a5a5a; width: 84px; margin: 0 5px; }
.app.hot::after { left: 0; right: 0; }
.tbspace { flex: 1; }
.tray { display: flex; align-items: center; padding-right: 64px; }
.weather { width: 62px; height: 62px; position: relative; margin-right: 14px; }
.wicon { width: 62px; height: 62px; }
.badge { position: absolute; right: 0; top: -8px; width: 30px; height: 36px; border-radius: 50%; background: #c4281c; font-size: 20px; display: flex; align-items: center; justify-content: center; color: #fff; }
.temp, .sky, .eng, .clock { font-size: 32.5px; white-space: nowrap; letter-spacing: -.3px; }
.sky { margin-left: 20px; }
.trayi { flex: none; }
.chevup { width: 30px; height: 30px; margin-left: 60px; }
.trcam { width: 36px; height: 36px; margin-left: 53px; }
.od { width: 42px; height: 28px; margin-left: 36px; }
.micw { width: 30px; height: 42px; margin-left: 44px; }
.batt { width: 42px; height: 28px; margin-left: 46px; }
.wifi { width: 40px; height: 34px; margin-left: 41px; }
.vol { width: 42px; height: 36px; margin-left: 35px; }
.eng { margin-left: 36px; font-size: 28px; }
.clock { margin-left: 34px; font-size: 29px; }
.notifi { width: 40px; height: 40px; margin-left: 43px; }
```
